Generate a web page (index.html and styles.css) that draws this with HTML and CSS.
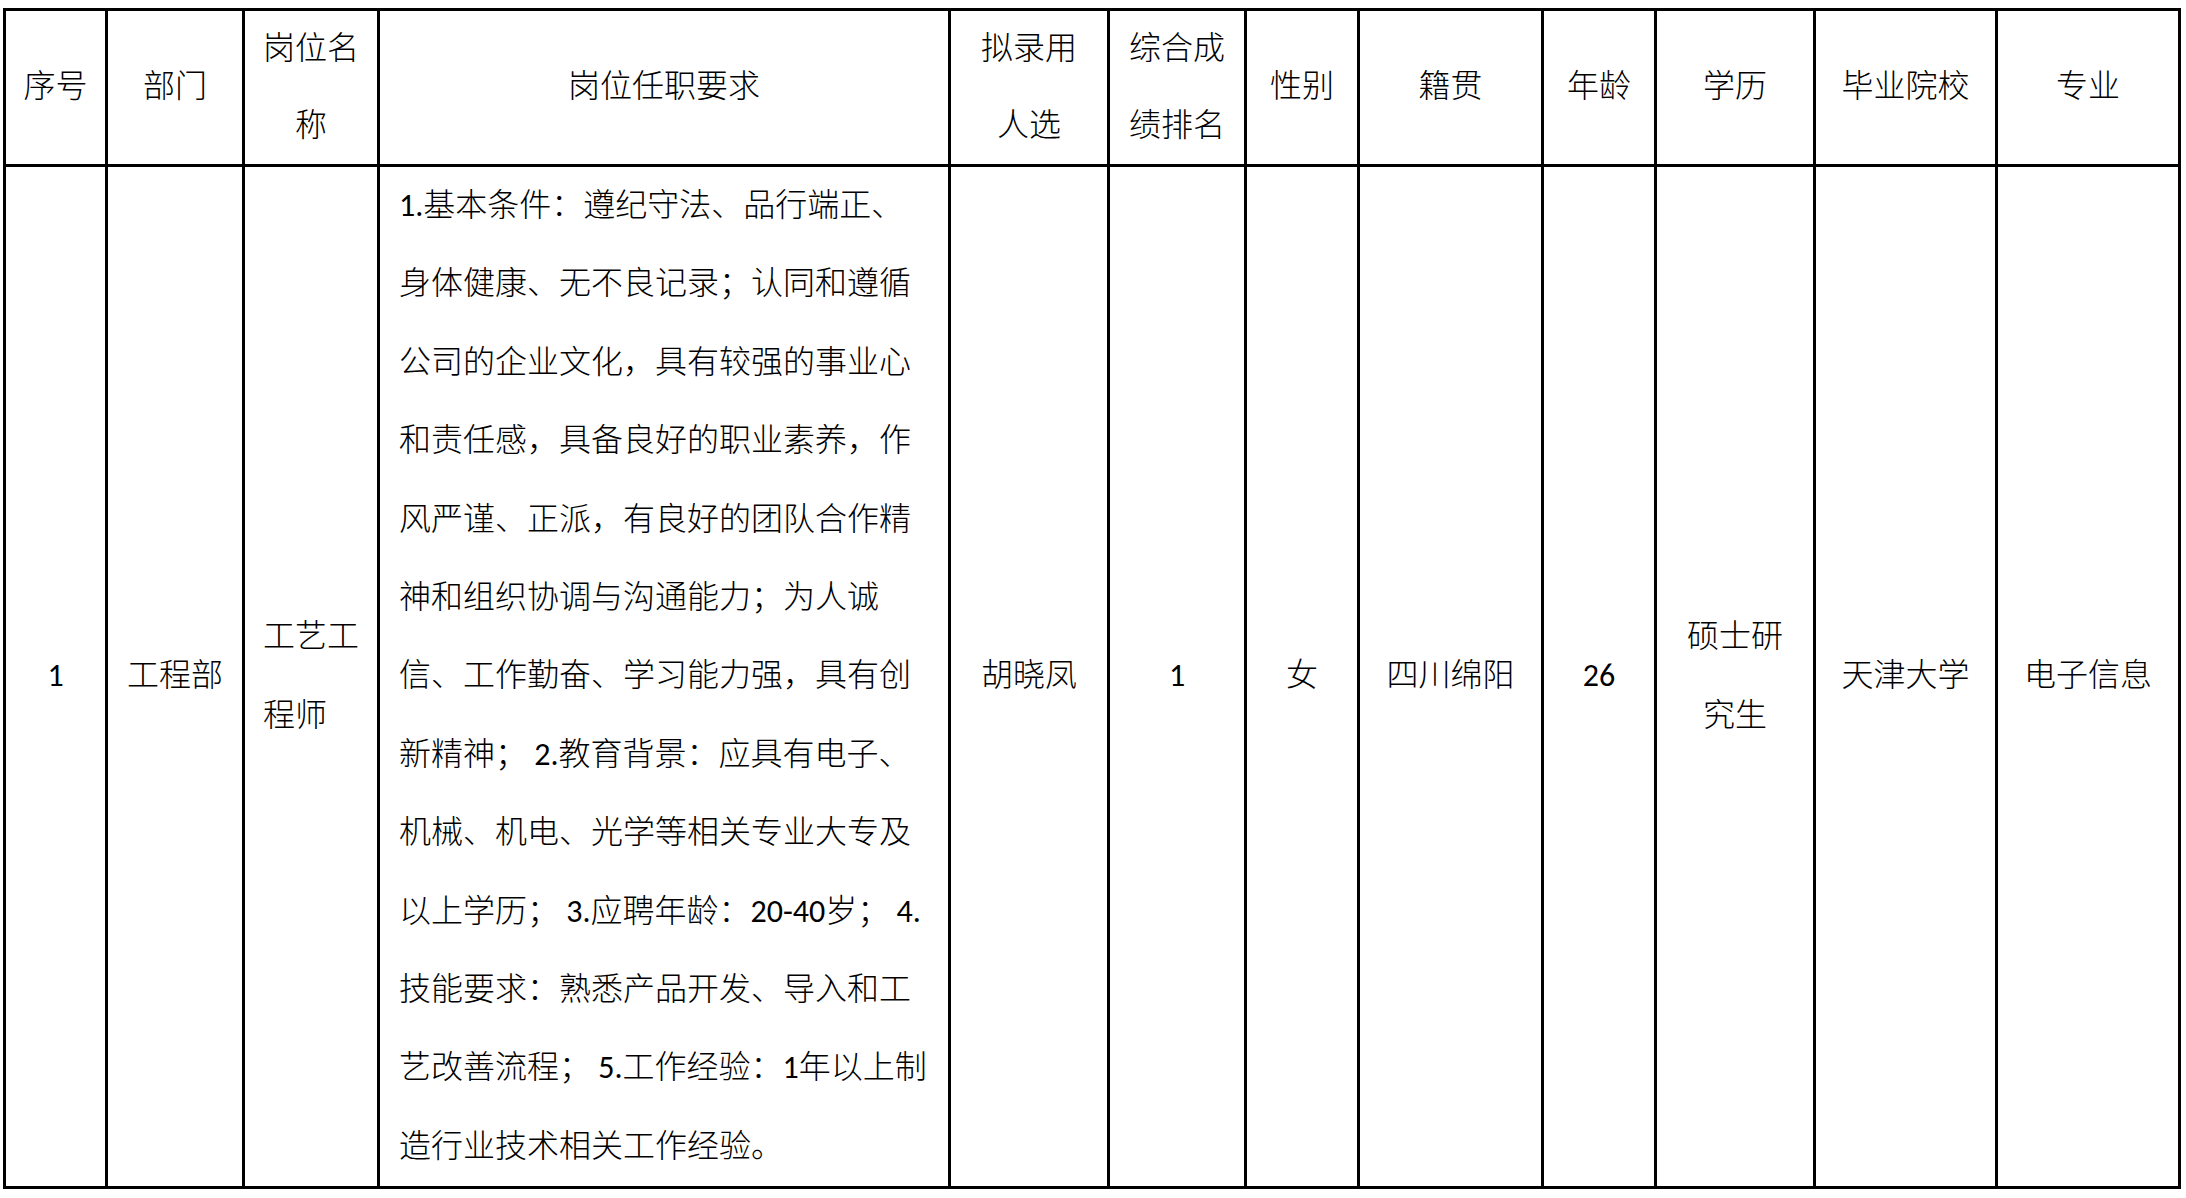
FILE: index.html
```html
<!DOCTYPE html>
<html lang="zh-CN">
<head>
<meta charset="utf-8">
<title>拟录用人选</title>
<link rel="stylesheet" href="styles.css">
</head>
<body>
<div class="page">
<table class="grid">
  <colgroup>
    <col class="c1"><col class="c2"><col class="c3"><col class="c4"><col class="c5"><col class="c6">
    <col class="c7"><col class="c8"><col class="c9"><col class="c10"><col class="c11"><col class="c12">
  </colgroup>
  <thead>
    <tr>
      <th>序号</th>
      <th>部门</th>
      <th>岗位名<br>称</th>
      <th>岗位任职要求</th>
      <th>拟录用<br>人选</th>
      <th>综合成<br>绩排名</th>
      <th>性别</th>
      <th>籍贯</th>
      <th>年龄</th>
      <th>学历</th>
      <th>毕业院校</th>
      <th>专业</th>
    </tr>
  </thead>
  <tbody>
    <tr>
      <td>1</td>
      <td>工程部</td>
      <td class="left">工艺工<br>程师</td>
      <td class="req">1.基本条件：遵纪守法、品行端正、<br>身体健康、无不良记录；认同和遵循<br>公司的企业文化，具有较强的事业心<br>和责任感，具备良好的职业素养，作<br>风严谨、正派，有良好的团队合作精<br>神和组织协调与沟通能力；为人诚<br>信、工作勤奋、学习能力强，具有创<br>新精神； 2.教育背景：应具有电子、<br>机械、机电、光学等相关专业大专及<br>以上学历； 3.应聘年龄：20-40岁； 4.<br>技能要求：熟悉产品开发、导入和工<br>艺改善流程； 5.工作经验：1年以上制<br>造行业技术相关工作经验。</td>
      <td>胡晓凤</td>
      <td>1</td>
      <td>女</td>
      <td>四川绵阳</td>
      <td>26</td>
      <td>硕士研<br>究生</td>
      <td>天津大学</td>
      <td>电子信息</td>
    </tr>
  </tbody>
</table>
</div>
</body>
</html>
```

FILE: styles.css
```css
html, body {
  margin: 0;
  padding: 0;
  background: #ffffff;
}

.page {
  padding: 8px 0 0 3px;
}

.grid {
  border-collapse: collapse;
  table-layout: fixed;
  width: 2178px;
  font-family: Carlito, Lato, "Noto Sans CJK SC", sans-serif;
  font-size: 32px;
  font-weight: 300;
  color: #000000;
}

.c1 { width: 102px; }
.c2 { width: 137px; }
.c3 { width: 135px; }
.c4 { width: 571px; }
.c5 { width: 159px; }
.c6 { width: 137px; }
.c7 { width: 113px; }
.c8 { width: 184px; }
.c9 { width: 113px; }
.c10 { width: 159px; }
.c11 { width: 182px; }
.c12 { width: 183px; }

.grid th,
.grid td {
  border: 3px solid #000000;
  padding: 0 4px;
  text-align: center;
  vertical-align: middle;
  white-space: nowrap;
  font-weight: 300;
}

.grid th {
  line-height: 76.5px;
}

.grid td {
  line-height: 78.4px;
}

.grid td.left {
  text-align: left;
  padding-left: 18px;
}

.grid td.req {
  text-align: left;
  padding-left: 19px;
}
```
